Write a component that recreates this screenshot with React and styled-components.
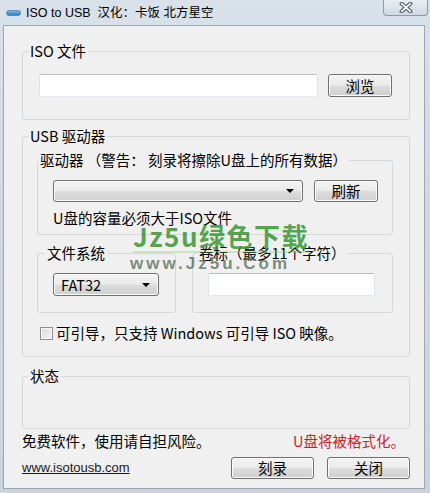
import React from 'react'
import styled, { createGlobalStyle } from 'styled-components'

const GlobalStyle = createGlobalStyle`
  html, body {
    margin: 0;
    padding: 0;
    background: #ffffff;
  }
  body {
    font-family: "Noto Sans CJK SC", "Liberation Sans", sans-serif;
    color: #000000;
  }
`

const Window = styled.div`
  position: relative;
  width: 430px;
  height: 493px;
  display: flex;
  flex-direction: column;
  overflow: hidden;
  background: linear-gradient(180deg, #d9e1ea 0%, #d0d9e3 40%, #c9d3de 100%);
`

const TitleBar = styled.div`
  height: 25px;
  flex: none;
  display: flex;
  align-items: center;
  padding-left: 6px;
`

const AppIcon = styled.svg`
  width: 15px;
  height: 6px;
  flex: none;
`

const Title = styled.span`
  margin-left: 5px;
  font-family: "Liberation Sans", "Noto Sans CJK SC", sans-serif;
  font-size: 12.5px;
  line-height: 16px;
  white-space: pre;
  color: #000000;
`

const CloseButton = styled.div`
  margin-left: auto;
  margin-right: 2px;
  align-self: flex-start;
  width: 45px;
  height: 16px;
  box-sizing: border-box;
  border: 1px solid #8e9aa8;
  border-top: none;
  border-radius: 0 0 4px 4px;
  background: linear-gradient(180deg, #e9eef3 0%, #dce3ea 50%, #d0d9e3 100%);
  display: flex;
  align-items: center;
  justify-content: center;
`

const Frame = styled.div`
  flex: 1;
  display: flex;
  padding: 0 5px 4px 3px;
  min-height: 0;
`

const Client = styled.div`
  flex: 1;
  display: flex;
  flex-direction: column;
  background: #f0f0f0;
  border: 1px solid #9aa7b5;
  padding: 0 14px 0 18px;
`

const Group = styled.fieldset`
  margin: ${p => p.$mt || 0}px 0 0 0;
  padding: 0;
  min-width: 0;
  border: 1px solid #d3d8dd;
  border-radius: 3px;
`

const Legend = styled.legend`
  margin-left: ${p => p.$ml}px;
  padding: 0 2px;
  font-size: 14.5px;
  line-height: 16px;
  white-space: pre;
  color: #000000;
`

const GroupBody = styled.div`
  padding: ${p => p.$pad};
  min-height: ${p => p.$minH || 0}px;
`

const Row = styled.div`
  display: flex;
  align-items: center;
  gap: ${p => p.$gap || 0}px;
  padding-left: ${p => p.$indent || 0}px;
`

const TextBox = styled.div`
  flex: ${p => (p.$w ? 'none' : 1)};
  width: ${p => (p.$w ? `${p.$w}px` : 'auto')};
  height: ${p => p.$h || 23}px;
  box-sizing: border-box;
  background: #ffffff;
  border: 1px solid;
  border-color: #b9bec6 #dde2e8 #e3e9ef #dde2e8;
  border-radius: 2px;
`

const Button = styled.div`
  flex: none;
  width: ${p => p.$w}px;
  height: ${p => p.$h || 23}px;
  box-sizing: border-box;
  border: 1px solid #707070;
  border-radius: 3px;
  background: linear-gradient(180deg, #f3f3f3 0%, #ebebeb 48%, #dddddd 52%, #cfcfcf 100%);
  box-shadow: inset 0 0 0 1px #fbfbfb;
  display: flex;
  align-items: center;
  justify-content: center;
  font-size: 14.5px;
  line-height: 16px;
  color: #000000;
`

const Combo = styled(Button)`
  justify-content: space-between;
  padding: 0 8px 0 7px;
`

const Arrow = styled.span`
  width: 0;
  height: 0;
  border-left: 4px solid transparent;
  border-right: 4px solid transparent;
  border-top: 4px solid #000000;
`

const Hint = styled.div`
  margin-top: 8px;
  padding-left: 15px;
  font-size: 14.5px;
  line-height: 16px;
`

const FsRow = styled.div`
  margin-top: 10px;
  display: grid;
  grid-template-columns: 139px 1fr;
  gap: 16px;
`

const CheckRow = styled.div`
  margin-top: 12px;
  margin-left: 3px;
  display: flex;
  align-items: center;
  gap: 3px;
  font-size: 14.5px;
  line-height: 16px;
`

const CheckBox = styled.span`
  width: 13px;
  height: 13px;
  box-sizing: border-box;
  border: 1px solid #8f8f8f;
  background: linear-gradient(135deg, #dcdcdc 0%, #f4f4f4 100%);
  box-shadow: inset 0 0 0 1px #f8f8f8;
`

const InfoRow = styled.div`
  margin-top: 4px;
  display: flex;
  justify-content: space-between;
  font-size: 14.5px;
  line-height: 16px;
`

const Warn = styled.span`
  color: #d0202a;
  margin-right: 5px;
`

const ActionRow = styled.div`
  margin-top: 8px;
  display: flex;
  align-items: center;
  gap: 13px;
`

const Link = styled.a`
  margin-right: auto;
  font-family: "Liberation Sans", sans-serif;
  font-size: 13px;
  line-height: 16px;
  color: #1a1a1a;
  text-decoration: underline;
`

const Watermark = styled.div`
  position: absolute;
  left: 133px;
  top: 221px;
  pointer-events: none;
  display: flex;
  flex-direction: column;
  align-items: flex-start;
`

const WatermarkTitle = styled.div`
  font-size: 26px;
  font-weight: 700;
  line-height: 30px;
  letter-spacing: 1.5px;
  color: rgba(58, 150, 48, 0.85);
  border-bottom: 2px solid rgba(150, 200, 120, 0.35);
`

const WatermarkUrl = styled.div`
  margin-top: 2px;
  margin-left: -3px;
  font-family: "Liberation Sans", sans-serif;
  font-size: 17px;
  font-weight: 700;
  line-height: 18px;
  letter-spacing: 3px;
  color: rgba(90, 112, 92, 0.8);
`

export default function App() {
  return (
    <Window>
      <GlobalStyle />
      <TitleBar>
        <AppIcon viewBox="0 0 15 6">
          <defs>
            <linearGradient id="pill" x1="0" y1="0" x2="0" y2="1">
              <stop offset="0" stopColor="#7cc0ee" />
              <stop offset="1" stopColor="#2a78c0" />
            </linearGradient>
          </defs>
          <rect x="0.5" y="0.5" width="14" height="5" rx="2.5" fill="url(#pill)" stroke="#2d6fa8" strokeWidth="0.6" />
        </AppIcon>
        <Title>ISO to USB  汉化：卡饭 北方星空</Title>
        <CloseButton>
          <svg width="14" height="11" viewBox="0 0 14 11">
            <path d="M2.5 1.5 L11.5 9.5 M11.5 1.5 L2.5 9.5" stroke="#4f5358" strokeWidth="3.8" strokeLinecap="round" />
            <path d="M2.5 1.5 L11.5 9.5 M11.5 1.5 L2.5 9.5" stroke="#f4f6f8" strokeWidth="1.7" strokeLinecap="round" />
          </svg>
        </CloseButton>
      </TitleBar>
      <Frame>
        <Client>
          <Group $mt={17}>
            <Legend $ml={5}>ISO 文件</Legend>
            <GroupBody $pad="15px 17px 22px 16px">
              <Row $gap={10}>
                <TextBox />
                <Button $w={64}>浏览</Button>
              </Row>
            </GroupBody>
          </Group>

          <Group $mt={8}>
            <Legend $ml={5}>USB 驱动器</Legend>
            <GroupBody $pad="8px 16px 15px 14px">
              <Group>
                <Legend $ml={0}>驱动器 （警告： 刻录将擦除U盘上的所有数据）</Legend>
                <GroupBody $pad="12px 14px 8px 0">
                  <Row $gap={11} $indent={15}>
                    <Combo $w={250} $h={22}>
                      <span />
                      <Arrow />
                    </Combo>
                    <Button $w={64} $h={22}>刷新</Button>
                  </Row>
                  <Hint>U盘的容量必须大于ISO文件</Hint>
                </GroupBody>
              </Group>

              <FsRow>
                <Group>
                  <Legend $ml={7}>文件系统</Legend>
                  <GroupBody $pad="12px 18px 16px 15px">
                    <Combo $w={106}>
                      <span>FAT32</span>
                      <Arrow />
                    </Combo>
                  </GroupBody>
                </Group>
                <Group>
                  <Legend $ml={4}>卷标（最多11个字符）</Legend>
                  <GroupBody $pad="12px 17px 16px 15px">
                    <TextBox $h={23} />
                  </GroupBody>
                </Group>
              </FsRow>

              <CheckRow>
                <CheckBox />
                <span>可引导，只支持 Windows 可引导 ISO 映像。</span>
              </CheckRow>
            </GroupBody>
          </Group>

          <Group $mt={11}>
            <Legend $ml={5}>状态</Legend>
            <GroupBody $pad="0" $minH={44} />
          </Group>

          <InfoRow>
            <span>免费软件，使用请自担风险。</span>
            <Warn>U盘将被格式化。</Warn>
          </InfoRow>

          <ActionRow>
            <Link>www.isotousb.com</Link>
            <Button $w={83} $h={22}>刻录</Button>
            <Button $w={83} $h={22}>关闭</Button>
          </ActionRow>
        </Client>
      </Frame>
      <Watermark>
        <WatermarkTitle>Jz5u绿色下载</WatermarkTitle>
        <WatermarkUrl>www.Jz5u.Com</WatermarkUrl>
      </Watermark>
    </Window>
  )
}
